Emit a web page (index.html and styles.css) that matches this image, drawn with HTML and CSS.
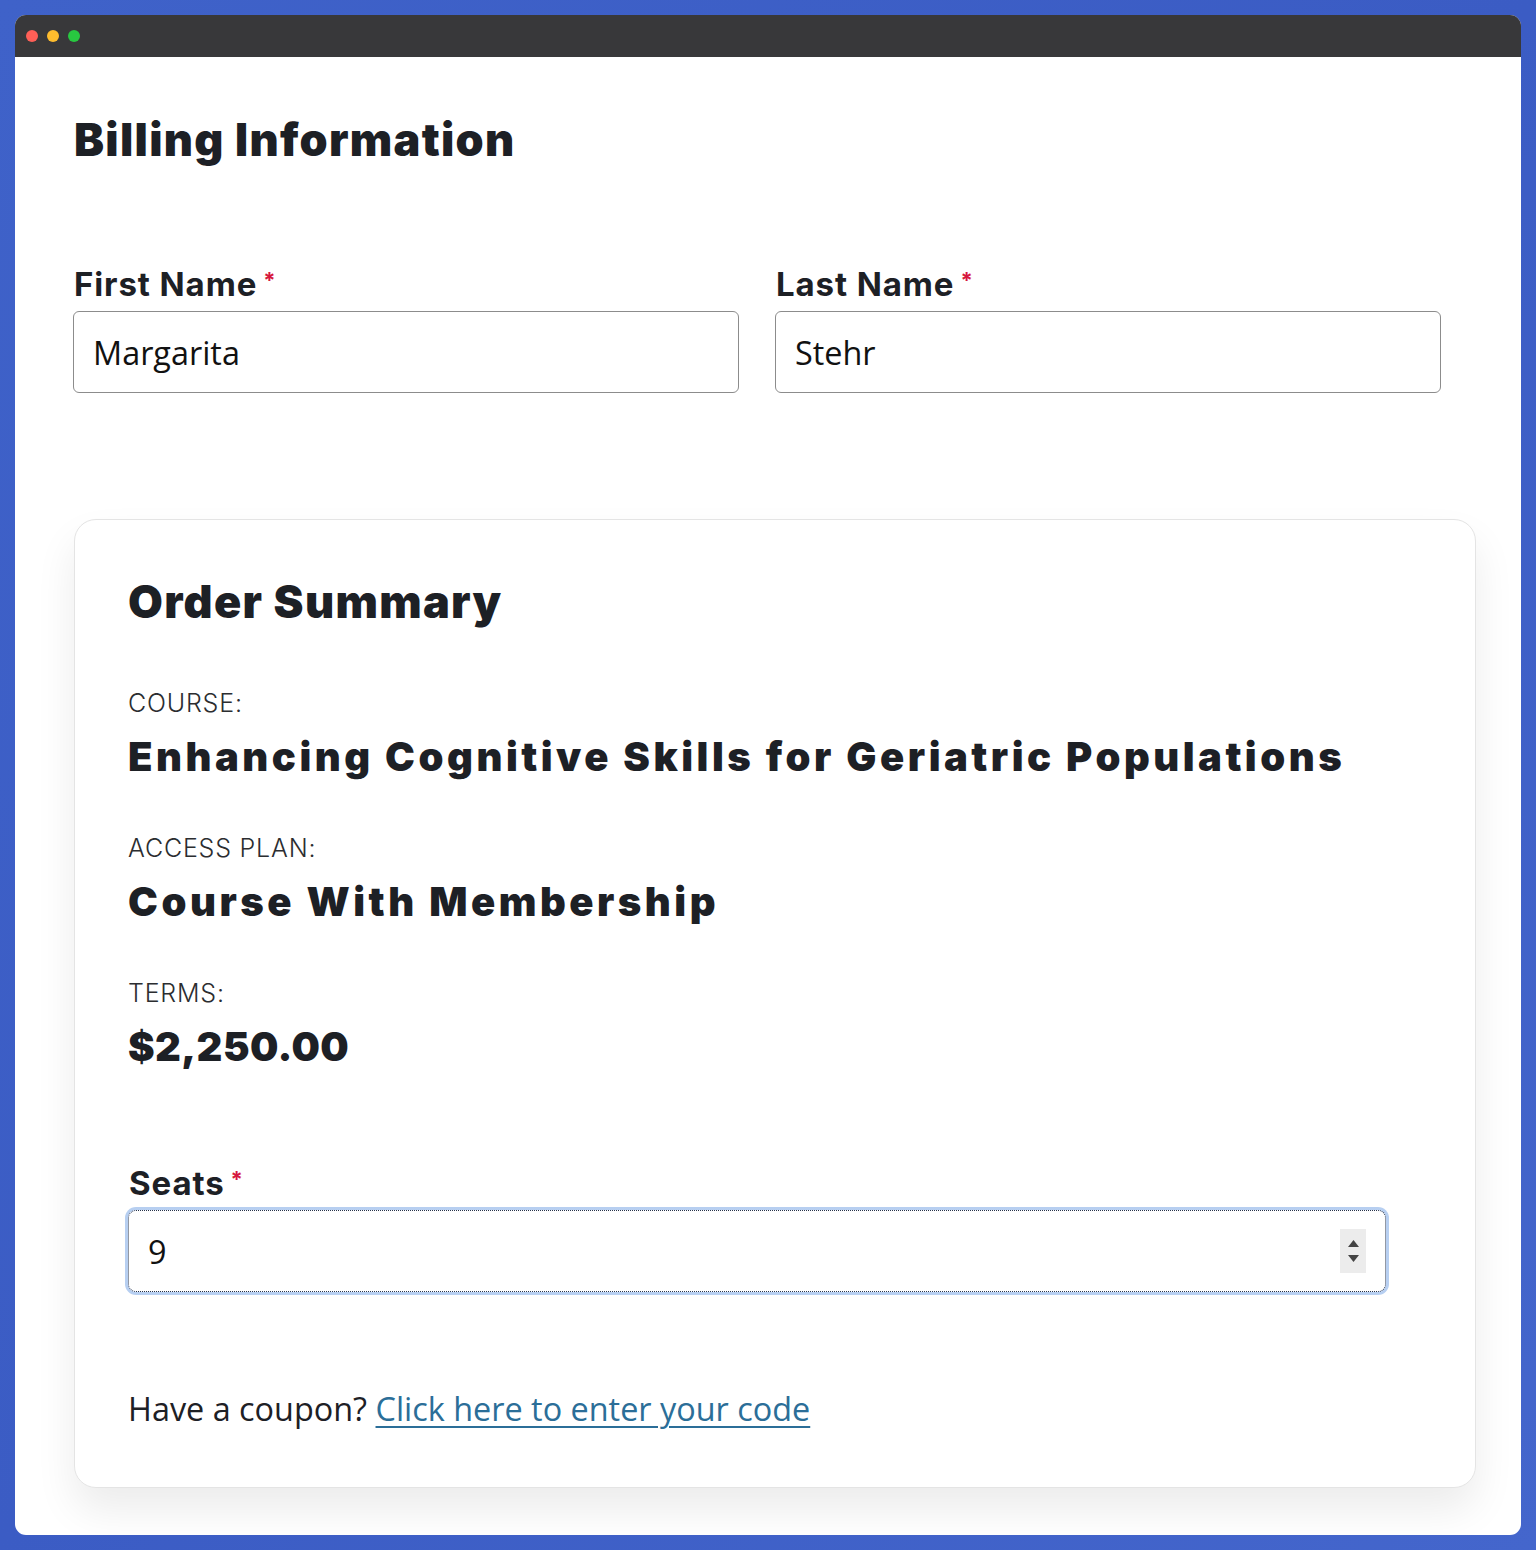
FILE: index.html
```html
<!DOCTYPE html>
<html lang="en">
<head>
<meta charset="utf-8">
<title>Billing Information</title>
<link rel="stylesheet" href="styles.css">
</head>
<body>
<div class="window">
  <div class="titlebar">
    <span class="dot red"></span>
    <span class="dot yellow"></span>
    <span class="dot green"></span>
  </div>
  <div class="content">
    <h1 class="heading">Billing Information</h1>
    <div class="name-row">
      <div class="field">
        <label class="label">First Name<span class="req">*</span></label>
        <div class="input">Margarita</div>
      </div>
      <div class="field">
        <label class="label">Last Name<span class="req">*</span></label>
        <div class="input">Stehr</div>
      </div>
    </div>
    <div class="card">
      <h2 class="heading">Order Summary</h2>
      <div class="item">
        <div class="item-label">COURSE:</div>
        <div class="item-value">Enhancing Cognitive Skills for Geriatric Populations</div>
      </div>
      <div class="item">
        <div class="item-label">ACCESS PLAN:</div>
        <div class="item-value">Course With Membership</div>
      </div>
      <div class="item">
        <div class="item-label">TERMS:</div>
        <div class="item-value price">$2,250.00</div>
      </div>
      <div class="seats">
        <label class="label">Seats<span class="req">*</span></label>
        <div class="input focus">
          <span>9</span>
          <span class="spinner">
            <svg width="11" height="7" viewBox="0 0 11 7"><path d="M0 7 L5.5 0 L11 7 Z" fill="#444"/></svg>
            <svg width="11" height="7" viewBox="0 0 11 7"><path d="M0 0 L11 0 L5.5 7 Z" fill="#444"/></svg>
          </span>
        </div>
      </div>
      <p class="coupon">Have a coupon? <a href="#" class="link">Click here to enter your code</a></p>
    </div>
  </div>
</div>
</body>
</html>
```

FILE: styles.css
```css
* { box-sizing: border-box; }
html, body { margin: 0; padding: 0; }
body {
  width: 1536px;
  height: 1550px;
  background: linear-gradient(135deg, #3f62c9 0%, #3b5cc4 50%, #4466cc 100%);
  padding: 15px;
  font-family: "Open Sans", sans-serif;
  color: #1d2025;
}
.window {
  width: 1506px;
  height: 1520px;
  border-radius: 11px;
  overflow: hidden;
  background: #fff;
  display: flex;
  flex-direction: column;
}
.titlebar {
  height: 42px;
  background: #38383a;
  display: flex;
  align-items: center;
  gap: 9px;
  padding-left: 11px;
  flex-shrink: 0;
}
.dot { width: 12px; height: 12px; border-radius: 50%; display: block; }
.red { background: #fe5f57; }
.yellow { background: #febc2e; }
.green { background: #28c840; }
.content {
  padding: 56px 45px 0 58px;
  flex: 1;
}
.heading {
  font-family: "Inter", "Liberation Sans", sans-serif;
  font-weight: 900;
  font-size: 45px;
  letter-spacing: 1.3px;
  line-height: 54px;
  margin: 0;
  color: #1d2025;
}
.content > .heading { padding-left: 1px; }
.name-row {
  display: grid;
  grid-template-columns: 666px 666px;
  gap: 36px;
  margin-top: 96px;
}
.label {
  display: block;
  font-family: "Inter", "Liberation Sans", sans-serif;
  font-weight: 700;
  font-size: 33px;
  letter-spacing: 0.9px;
  line-height: 42px;
  margin-bottom: 6px;
  padding-left: 1px;
  color: #1d2025;
}
.req {
  color: #d6173d;
  font-size: 22px;
  vertical-align: top;
  margin-left: 6px;
  line-height: 34px;
}
.input {
  height: 82px;
  border: 1px solid #8c8c8c;
  border-radius: 6px;
  padding: 0 19px;
  display: flex;
  align-items: center;
  font-size: 32.4px;
  color: #111;
  background: #fff;
}
.card {
  margin-top: 126px;
  margin-left: 1px;
  border: 1px solid #e4e4e4;
  border-radius: 22px;
  padding: 55px 54px 57px 53px;
  box-shadow: 0 22px 40px rgba(0,0,0,0.08);
  background: #fff;
}
.item { margin-top: 51px; }
.card .heading + .item { margin-top: 59px; }
.item-label {
  font-family: "Inter", "Liberation Sans", sans-serif;
  font-size: 25px;
  font-weight: 300;
  letter-spacing: 0.8px;
  line-height: 30px;
  color: #2b2d30;
}
.item-value {
  font-family: "Inter", "Liberation Sans", sans-serif;
  font-weight: 900;
  font-size: 40px;
  line-height: 50px;
  margin-top: 14px;
  letter-spacing: 3.5px;
}
.item-value.price { letter-spacing: 0.4px; }
.seats { margin-top: 90px; width: 1258px; }
.input.focus {
  border: 1px dotted #27324a;
  border-radius: 8px;
  box-shadow: 0 0 0 3px #b7cff1;
  justify-content: space-between;
  padding-right: 19px;
}
.spinner {
  width: 26px;
  height: 44px;
  background: #ececec;
  display: flex;
  flex-direction: column;
  align-items: center;
  justify-content: center;
  gap: 8px;
}
.spinner svg { display: block; }
.coupon {
  margin: 94px 0 0;
  font-size: 32.4px;
  line-height: 44px;
  color: #1d2025;
}
.link { color: #2b6e98; text-decoration: underline; text-underline-offset: 5px; text-decoration-thickness: 2px; }
```
